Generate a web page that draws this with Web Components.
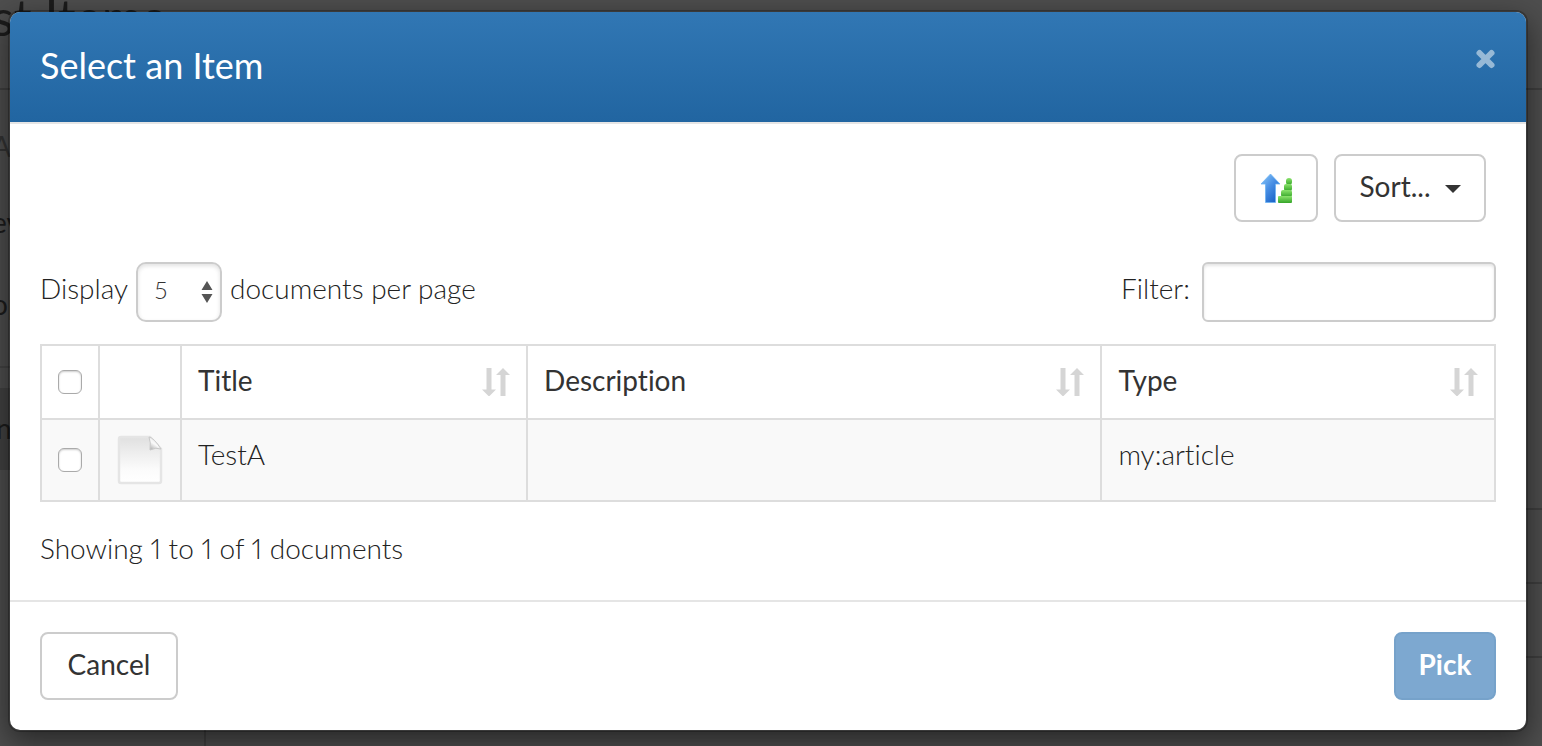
<!DOCTYPE html>
<html lang="en">
<head>
<meta charset="utf-8">
<title>Select an Item</title>
<style>
  html, body { margin: 0; height: 100%; overflow: hidden; }
  body {
    font: 300 28px/40px Lato, "Open Sans", sans-serif;
    font-variant-ligatures: none;
    font-variant-numeric: proportional-nums;
    color: #222;
    background: #4e4e4e;
  }
</style>
</head>
<body>
<picker-page></picker-page>

<script>
const define = (name, html, setup) => {
  const template = document.createElement('template');
  template.innerHTML = html;
  customElements.define(name, class extends HTMLElement {
    constructor() {
      super();
      this.attachShadow({ mode: 'open' }).append(template.content.cloneNode(true));
    }
    connectedCallback() { if (setup) setup(this, this.shadowRoot); }
  });
};

/* Page content dimmed by the modal backdrop */
define('dimmed-page', `
<style>
  :host { display: block; height: 100vh; overflow: hidden; color: #1c1c1c; }
  * { box-sizing: border-box; }
  header { height: 90px; border-bottom: 2px solid #3f3f3f; }
  h1 { margin: 0 0 0 -8px; font: 400 50px/34px Lato, sans-serif; font-variant-ligatures: none; white-space: nowrap; }
  .cols { display: grid; grid-template-columns: 206px 1fr; height: 100%; }
  nav { border-right: 2px solid #404040; padding-top: 36px; }
  nav span { display: block; height: 40px; margin-left: -8px; margin-bottom: 42px; white-space: nowrap; font-weight: 400; }
  nav .cap { color: #333; margin-bottom: 36px; }
  nav .rule { border-top: 2px solid #434343; height: 22px; margin-top: 4px; }
  nav .active { background: #424242; height: 82px; padding: 20px 4px; }
  main { padding-top: 418px; }
  main div { height: 74px; border-top: 2px solid #3f3f3f; }
</style>
<header><h1>st Items</h1></header>
<div class="cols">
  <nav>
    <span class="cap">A</span><span>ev</span><span>op</span>
    <div class="rule"></div>
    <div class="active"><span>n</span></div>
  </nav>
  <main><div></div><div></div><div></div></main>
</div>`);

/* Dialog frame with title, body and footer */
define('modal-dialog', `
<style>
  :host {
    display: block; background: #fff; background-clip: padding-box;
    border: 2px solid rgba(0,0,0,.25); border-radius: 12px;
    box-shadow: 0 10px 30px rgba(0,0,0,.5);
  }
  header {
    display: flex; justify-content: space-between; align-items: flex-start;
    height: 110px; box-sizing: border-box; padding: 30px;
    border-radius: 10px 10px 0 0;
    background: linear-gradient(#3177b4, #2165a1); color: #fff;
  }
  h2 { margin: 0; font: 400 36px/46px Lato, sans-serif; }
  .close { border: 0; padding: 0; background: none; width: 22px; height: 34px; display: grid; place-items: center; color: #97b9d6; }
  .content { padding: 30px; border-top: 2px solid #e5e5e5; }
  footer { display: flex; justify-content: space-between; padding: 30px; border-top: 2px solid #e5e5e5; }
</style>
<header>
  <h2><slot name="title"></slot></h2>
  <button class="close" aria-label="Close"><svg width="22" height="22" viewBox="0 0 22 22"><path d="M5.500 5L17.500 17M17.500 5L5.500 17" stroke="currentColor" stroke-width="6" stroke-linecap="round"/></svg></button>
</header>
<div class="content"><slot></slot></div>
<footer><slot name="footer"></slot></footer>`);

define('ui-button', `
<style>
  :host { display: block; }
  button {
    display: flex; align-items: center; justify-content: center; gap: 14px;
    height: 68px; width: 100%; box-sizing: border-box; padding: 0 0 4px;
    border: 2px solid #ccc; border-radius: 8px; background: #fff;
    font: 400 28px/40px Lato, sans-serif; color: #333; white-space: nowrap;
  }
  :host([primary]) button { background: #7da8d0; border-color: #76a2ca; color: #fff; font-weight: 700; }
</style>
<button><slot></slot></button>`,
(host, root) => {
  const label = host.getAttribute('label');
  if (label) root.querySelector('button').setAttribute('aria-label', label);
});

define('page-size', `
<style>
  :host { display: flex; align-items: center; height: 60px; }
  label { padding-bottom: 8px; }
  .box { display: grid; margin: 0 8px; width: 86px; }
  select, svg { grid-area: 1 / 1; }
  select {
    appearance: none; box-sizing: border-box; height: 60px; width: 100%;
    border: 2px solid #ccc; border-radius: 10px; background: #fff;
    box-shadow: inset 0 2px 4px rgba(0,0,0,.12);
    padding: 0 16px 4px; font: 300 24px/40px Lato, sans-serif; color: #333;
  }
  svg { justify-self: end; align-self: center; margin-right: 9px; pointer-events: none; }
</style>
<label for="size">Display</label>
<span class="box">
  <select id="size"><option>5</option><option>10</option><option>25</option></select>
  <svg width="12" height="22" viewBox="0 0 12 22"><path d="M6 0L11.500 9H.5zM6 22L.5 13h11z" fill="#555"/></svg>
</span>
<label for="size">documents per page</label>`);

define('filter-box', `
<style>
  :host { display: flex; align-items: center; gap: 12px; height: 60px; }
  label { padding-bottom: 8px; }
  input {
    box-sizing: border-box; width: 294px; height: 60px; padding: 0 16px;
    border: 2px solid #ccc; border-radius: 6px; background: #fff;
    box-shadow: inset 0 2px 3px rgba(0,0,0,.1); font: inherit; color: #555;
  }
</style>
<label for="filter">Filter:</label><input id="filter" type="text">`);

define('sort-mark', `
<style>:host { display: block; width: 28px; height: 28px; } svg { display: block; }</style>
<svg width="28" height="28" viewBox="0 0 28 28" fill="#d5d5d5"><path d="M4.500 0h5v21.500h4.500L7 28.500 0 21.500h4.500zM18.500 28V7H14L21 0l7 7h-4.500V28z"/></svg>`);

define('tick-box', `
<style>
  :host { display: block; width: 24px; height: 24px; margin: 0 auto; }
  input {
    appearance: none; display: block; margin: 0; box-sizing: border-box; width: 24px; height: 24px;
    border: 1px solid #aaa; border-radius: 6px; background: #fff;
    box-shadow: inset 0 1px 2px rgba(0,0,0,.2);
  }
</style>
<input type="checkbox">`,
(host, root) => root.querySelector('input').setAttribute('aria-label', host.getAttribute('label')));

define('document-table', `
<style>
  :host { display: block; }
  table { width: 100%; table-layout: fixed; border-collapse: collapse; }
  th, td { border: 2px solid #ddd; padding: 0 16px; text-align: left; vertical-align: middle; }
  th { height: 72px; font-weight: 400; color: #333; }
  td { height: 80px; background: #f9f9f9; }
  th:first-child, td:first-child, .icon { padding: 0; }
  .icon svg { display: block; margin: 0 auto; }
  .head { display: flex; align-items: center; justify-content: space-between; }
  .head span { padding-bottom: 4px; }
  .text { display: block; padding-bottom: 12px; }
  .select { width: 58px; }
  .thumb { width: 82px; }
  .title { width: 23.8%; }
  .description { width: 39.5%; }
</style>
<table>
  <colgroup><col class="select"><col class="thumb"><col class="title"><col class="description"><col></colgroup>
  <thead><tr>
    <th><tick-box label="Select all"></tick-box></th><th></th>
    <th><div class="head"><span>Title</span><sort-mark></sort-mark></div></th>
    <th><div class="head"><span>Description</span><sort-mark></sort-mark></div></th>
    <th><div class="head"><span>Type</span><sort-mark></sort-mark></div></th>
  </tr></thead>
  <tbody><tr>
    <td><tick-box label="Select TestA"></tick-box></td>
    <td class="icon"><svg width="46" height="50" viewBox="0 0 46 50">
      <defs>
        <linearGradient id="sheet" x2="0" y2="1"><stop stop-color="#e0e0e0"/><stop offset=".3" stop-color="#ececec"/><stop offset=".7" stop-color="#fbfbfb"/><stop offset="1" stop-color="#fff"/></linearGradient>
        <linearGradient id="fold" x1=".2" y1="1" x2=".8" y2="0"><stop stop-color="#b0b0b0"/><stop offset=".45" stop-color="#fafafa"/><stop offset="1" stop-color="#e0e0e0"/></linearGradient>
      </defs>
      <path d="M4 2H33L44 14V46Q44 48 42 48H4Q2 48 2 46V4Q2 2 4 2Z" fill="url(#sheet)" stroke="#e5e5e5" stroke-width="2.500"/>
      <path d="M32 2Q37 3 44 14Q39 12 33 15Q34 7 32 2Z" fill="url(#fold)" stroke="#c8c8c8"/>
    </svg></td>
    <td><span class="text">TestA</span></td><td></td><td><span class="text">my:article</span></td>
  </tr></tbody>
</table>`);

define('picker-page', `
<style>
  :host { display: grid; height: 100vh; overflow: hidden; }
  dimmed-page, modal-dialog { grid-area: 1 / 1; min-width: 0; }
  modal-dialog { align-self: start; margin: 10px 14px 14px 8px; position: relative; }
  .tools { display: flex; justify-content: flex-end; gap: 16px; padding-right: 10px; }
  .icon-button { width: 84px; }
  .sort { width: 152px; }
  .cancel { width: 138px; }
  .pick { width: 102px; }
  .controls { display: flex; justify-content: space-between; margin: 40px 0 22px; }
  p { margin: 26px 0 2px; }
  svg { display: block; flex: none; margin-top: 6px; }
</style>
<dimmed-page aria-hidden="true"></dimmed-page>
<modal-dialog role="dialog">
  <span slot="title">Select an Item</span>
  <div class="tools">
    <ui-button class="icon-button" label="Sort ascending"><svg width="32" height="32" viewBox="0 0 32 32">
      <defs>
        <linearGradient id="up" x2=".8" y2="1"><stop stop-color="#8dcafa"/><stop offset=".5" stop-color="#478ee4"/><stop offset="1" stop-color="#165fc4"/></linearGradient>
        <linearGradient id="step" x2="0" y2="1"><stop stop-color="#8be36c"/><stop offset="1" stop-color="#35a529"/></linearGradient>
      </defs>
      <path d="M10.500 1L20 11H15.500V29.500H5.500V11H1Z" fill="url(#up)" stroke="#6cb2f2" stroke-width=".8"/>
      <g fill="url(#step)"><rect x="26" y="5" width="6" height="7" rx="3"/><rect x="24" y="11" width="8" height="7" rx="2"/><rect x="21" y="17" width="11" height="7" rx="2"/><rect x="18" y="23" width="14" height="7" rx="1"/></g>
    </svg></ui-button>
    <ui-button class="sort">Sort... <svg width="16" height="8" viewBox="0 0 16 8"><path d="M0 0h16L8 8z" fill="#333"/></svg></ui-button>
  </div>
  <div class="controls"><page-size></page-size><filter-box></filter-box></div>
  <document-table></document-table>
  <p>Showing 1 to 1 of 1 documents</p>
  <ui-button slot="footer" class="cancel">Cancel</ui-button>
  <ui-button slot="footer" class="pick" primary>Pick</ui-button>
</modal-dialog>`);
</script>
</body>
</html>
